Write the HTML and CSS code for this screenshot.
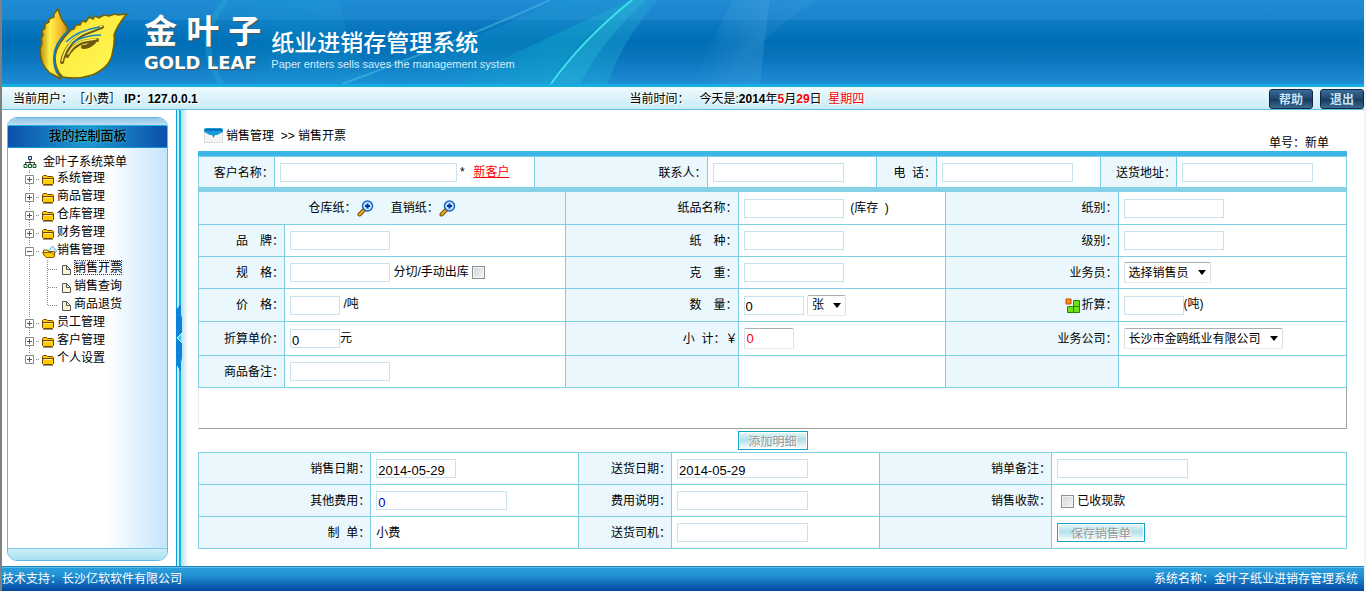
FILE: index.html
```html
<!DOCTYPE html>
<html lang="zh-CN">
<head>
    <meta charset="utf-8">
    <title>金叶子纸业进销存管理系统</title>
    <link rel="stylesheet" href="styles.css">
</head>
<body>
    <!-- shared icons -->
    <svg class="defs" width="0" height="0">
        <symbol id="plus" viewBox="0 0 18 18">
            <path d="M5.500 0v4M5.500 14v4M12 9.500h4" stroke="#888" stroke-dasharray="1 1"/>
            <path d="M1.500 5.500h8v8h-8z" fill="#fff" stroke="#888"/>
            <path d="M3 9.500h5M5.500 7v5" stroke="#555"/>
        </symbol>
        <symbol id="plus-last" viewBox="0 0 18 18">
            <path d="M5.500 0v4M12 9.500h4" stroke="#888" stroke-dasharray="1 1"/>
            <path d="M1.500 5.500h8v8h-8z" fill="#fff" stroke="#888"/>
            <path d="M3 9.500h5M5.500 7v5" stroke="#555"/>
        </symbol>
        <symbol id="minus" viewBox="0 0 18 18">
            <path d="M5.500 0v4M5.500 14v4M12 9.500h4" stroke="#888" stroke-dasharray="1 1"/>
            <path d="M1.500 5.500h8v8h-8z" fill="#fff" stroke="#888"/>
            <path d="M3 9.500h5" stroke="#555"/>
        </symbol>
        <symbol id="branch" viewBox="0 0 36 18">
            <path d="M5.500 0v18M23.500 0v18M24 9.500h10" stroke="#888" stroke-dasharray="1 1"/>
        </symbol>
        <symbol id="branch-last" viewBox="0 0 36 18">
            <path d="M5.500 0v18M23.500 0v9M24 9.500h10" stroke="#888" stroke-dasharray="1 1"/>
        </symbol>
        <symbol id="folder" viewBox="0 0 15 18">
            <path d="M0.500 13.500v-7l1-1h3l1 1h5l1 1v6l-1 1h-9z" fill="#fc0" stroke="#7a4300"/>
            <path d="M1 8.500h10" stroke="#7a4300"/>
            <path d="M2 9.500h8" stroke="#ffec8a"/>
            <path d="M1 15.500h10" stroke="#998"/>
        </symbol>
        <symbol id="folder-open" viewBox="0 0 15 18">
            <path d="M6.500 9l4-5 4 5-2 3h-5z" fill="#d8f3fb" stroke="#58b4d8"/>
            <path d="M1.500 13v-5h4l1 1.500h6v4z" fill="#ffe27a" stroke="#8a5a00"/>
            <path d="M.5 10.500h9l2 1.500 1.500 2-2 1.500h-7z" fill="#fc0" stroke="#8a5a00"/>
        </symbol>
        <symbol id="page" viewBox="0 0 12 18">
            <path d="M1.500 5.500h4l4 4v5h-8z" fill="#fff3d6" stroke="#555"/>
            <path d="M5.500 5.500v4h4" fill="none" stroke="#555"/>
        </symbol>
        <symbol id="search" viewBox="0 0 17 17">
            <path d="M2.500 14.500l5-5" stroke="#7a4a00" stroke-width="4" stroke-linecap="round"/>
            <path d="M2.500 14.500l4-4" stroke="#f0b020" stroke-width="2" stroke-linecap="round"/>
            <circle cx="10.500" cy="6" r="5" fill="#bfe6ff" stroke="#1c62c4" stroke-width="1.500"/>
            <path d="M8 6h5M10.500 3.500v5" stroke="#0a2f9c" stroke-width="2"/>
        </symbol>
    </svg>

    <header class="banner">
        <svg class="banner-bg" viewBox="0 0 1362 84" preserveAspectRatio="xMinYMin slice">
            <defs>
                <linearGradient id="sweep" x1="0" x2="1">
                    <stop offset="0" stop-color="#0fb4cf" stop-opacity="0"/>
                    <stop offset=".5" stop-color="#12b3d2" stop-opacity=".5"/>
                    <stop offset="1" stop-color="#2cb5d5" stop-opacity=".35"/>
                </linearGradient>
                <linearGradient id="veil" x1="0" x2="1">
                    <stop offset="0" stop-color="#4fa6dc" stop-opacity="0"/>
                    <stop offset="1" stop-color="#4fa6dc" stop-opacity=".5"/>
                </linearGradient>
            </defs>
            <path d="M216 0q-30 40 8 84H380Q340 40 338 0z" fill="url(#sweep)" opacity=".3"/>
            <path d="M224 0Q190 40 220 84" fill="none" stroke="#27b6dc" stroke-width="6" opacity=".3"/>
            <path d="M300 84Q460 50 556 0H630Q560 50 550 84z" fill="url(#sweep)" opacity=".4"/>
            <path d="M340 84Q460 40 548 0" fill="none" stroke="#5fd0e6" stroke-width="2" opacity=".4"/>
            <path d="M450 84Q560 30 630 0H656Q620 40 606 84z" fill="url(#sweep)" opacity=".8"/>
            <path d="M552 84Q580 40 630 0H644Q600 40 578 84z" fill="#31c4df" opacity=".3"/>
            <path d="M549 84Q580 40 630 0" fill="none" stroke="#3fe0ee" stroke-width="2"/>
            <path d="M690 84L730 0H768Q762 40 758 84z" fill="url(#veil)" opacity=".6"/>
            <path d="M706 84Q712 40 730 0H814Q750 40 732 84z" fill="url(#veil)" opacity=".4"/>
        </svg>
        <a class="logo" href="#" aria-label="金叶子">
            <svg width="92" height="74" viewBox="38 6 92 74">
                <defs>
                    <linearGradient id="gold" x1="0" y1="0" x2="1" y2="1">
                        <stop offset="0" stop-color="#c89410"/>
                        <stop offset=".3" stop-color="#ffe93c"/>
                        <stop offset=".75" stop-color="#fff552"/>
                        <stop offset="1" stop-color="#c09208"/>
                    </linearGradient>
                    <linearGradient id="gold-left" x1="0" x2="1">
                        <stop offset="0" stop-color="#b98c0a"/>
                        <stop offset=".35" stop-color="#fff04c"/>
                        <stop offset=".75" stop-color="#f4b92a"/>
                        <stop offset="1" stop-color="#c08a10"/>
                    </linearGradient>
                </defs>
                <path d="M58 9l-4 5v3l-5 2v3l-4 2v4l-3 3 1 4-2 4 1 4-2 6q0 16 10 24l11 6q-9-14-2-32 3-8 9-16l-1-4-5-7-2-5z" fill="url(#gold-left)" stroke="#776000" stroke-width="1.500"/>
                <path d="M127 14l-9 1-3-1-6 2-5-1-5 3-4-2-2 3-4-2-3 5-4-1-2 4-4 0-2 4-3 1Q57 44 55 56q0 15 8 21 14 3 29-2 17-7 20-20 3-12 2-20 3-9 11-19z" fill="url(#gold)" stroke="#776000" stroke-width="1.500"/>
                <path d="M68 31Q54 44 54 58q0 10 4 16" fill="none" stroke="#0f78b0" stroke-width="2"/>
                <path d="M102 27l-18 7Q66 43 62 62M97 40l-14 2q-11 4-16 14M83 47q6 0 11-5" fill="none" stroke="#6b5b10" stroke-width="4" stroke-linecap="round"/>
                <path d="M102 26l-18 7Q66 42 62 61M96 39l-13 2q-11 4-15 13" fill="none" stroke="#f8ec60" stroke-width="1.500" stroke-linecap="round"/>
                <path d="M66 42q12-12 34-15M72 43q12-8 29-8" fill="none" stroke="#1787bd" stroke-width="1.500"/>
            </svg>
            <span class="brand">
                <span class="brand-cn">金 叶 子</span>
                <span class="brand-en">GOLD LEAF</span>
            </span>
        </a>
        <div class="sysname">
            <h1>纸业进销存管理系统</h1>
            <p>Paper enters sells saves the management system</p>
        </div>
    </header>

    <div class="statusbar">
        <div>当前用户：［小费］ <b>IP：127.0.0.1</b></div>
        <div class="today"><span>当前时间：</span><span>今天是:<b>2014</b>年<b class="red">5</b>月<b class="red">29</b>日&nbsp; <span class="red">星期四</span></span></div>
        <div class="actions">
            <button type="button">帮助</button>
            <button type="button">退出</button>
        </div>
    </div>

    <div class="main">
        <nav class="sidebar">
            <div class="panel">
                <div class="panel-cap"></div>
                <h2>我的控制面板</h2>
                <div class="panel-body">
                    <div class="tree-root">
                        <svg width="14" height="14" viewBox="0 0 14 14"><path d="M7 4v6M2.500 10V7.500h9V10" fill="none" stroke="#333"/><path d="M5.500 1.500h3v3h-3z" fill="#cde" stroke="#235"/><path d="M1 9.500h3v3H1zM5.500 9.500h3v3h-3zM10 9.500h3v3h-3z" fill="#cfc" stroke="#253"/></svg>
                        金叶子系统菜单
                    </div>
                    <ul class="tree">
                        <li><svg width="18" height="18"><use href="#plus"/></svg><svg width="15" height="18"><use href="#folder"/></svg><a href="#">系统管理</a></li>
                        <li><svg width="18" height="18"><use href="#plus"/></svg><svg width="15" height="18"><use href="#folder"/></svg><a href="#">商品管理</a></li>
                        <li><svg width="18" height="18"><use href="#plus"/></svg><svg width="15" height="18"><use href="#folder"/></svg><a href="#">仓库管理</a></li>
                        <li><svg width="18" height="18"><use href="#plus"/></svg><svg width="15" height="18"><use href="#folder"/></svg><a href="#">财务管理</a></li>
                        <li><svg width="18" height="18"><use href="#minus"/></svg><svg width="15" height="18"><use href="#folder-open"/></svg><a href="#">销售管理</a></li>
                        <li><svg width="36" height="18"><use href="#branch"/></svg><svg width="14" height="18"><use href="#page"/></svg><a class="current" href="#">销售开票</a></li>
                        <li><svg width="36" height="18"><use href="#branch"/></svg><svg width="14" height="18"><use href="#page"/></svg><a href="#">销售查询</a></li>
                        <li><svg width="36" height="18"><use href="#branch-last"/></svg><svg width="14" height="18"><use href="#page"/></svg><a href="#">商品退货</a></li>
                        <li><svg width="18" height="18"><use href="#plus"/></svg><svg width="15" height="18"><use href="#folder"/></svg><a href="#">员工管理</a></li>
                        <li><svg width="18" height="18"><use href="#plus"/></svg><svg width="15" height="18"><use href="#folder"/></svg><a href="#">客户管理</a></li>
                        <li><svg width="18" height="18"><use href="#plus-last"/></svg><svg width="15" height="18"><use href="#folder"/></svg><a href="#">个人设置</a></li>
                    </ul>
                </div>
                <div class="panel-foot"></div>
            </div>
        </nav>

        <div class="splitter">
            <svg width="7" height="68" viewBox="0 0 7 68"><path d="M0 6L5 0v11l1 3v40l-1 4v10L0 60z" fill="#0a83d8"/><path d="M1 34l5-5v10z" fill="#29d3ee" stroke="#e8fbff"/></svg>
        </div>

        <form class="content">
            <div class="crumbs">
                <svg width="20" height="16" viewBox="0 0 20 16"><path d="M.5 3.500h18v12H.5z" fill="#f4f4f4" stroke="#ddd"/><path d="M0 5V2l2-1h15l2 1v3l-6 3h-2l-1.500 3L8 8H6z" fill="#189ad8"/><path d="M1 2h17v2H1z" fill="#0b70b4"/></svg>
                <span>销售管理&nbsp; &gt;&gt; 销售开票</span>
                <span class="billno">单号：新单</span>
            </div>

            <table class="grid customer">
                <colgroup><col class="a1"><col class="a2"><col class="a3"><col class="a4"><col class="a5"><col class="a6"><col class="a1"><col class="a4"></colgroup>
                <tr>
                    <th><label for="customer">客户名称：</label></th>
                    <td><input id="customer" class="w177" type="text"> *&nbsp; <a class="newcust" href="#">新客户</a></td>
                    <th><label for="contact">联系人：</label></th>
                    <td><input id="contact" class="w131" type="text"></td>
                    <th><label for="phone">电&nbsp; 话：</label></th>
                    <td><input id="phone" class="w131" type="text"></td>
                    <th><label for="address">送货地址：</label></th>
                    <td><input id="address" class="w131" type="text"></td>
                </tr>
            </table>

            <table class="grid goods">
                <colgroup><col class="b1"><col class="b2"><col class="b3"><col class="b4"><col class="b3"><col class="b5"></colgroup>
                <tr>
                    <th class="pick" colspan="2">
                        <a href="#">仓库纸：<svg width="17" height="17"><use href="#search"/></svg></a>
                        <a href="#">直销纸：<svg width="17" height="17"><use href="#search"/></svg></a>
                    </th>
                    <th><label for="paper">纸品名称：</label></th>
                    <td><input id="paper" class="w100" type="text"> &nbsp;(库存&nbsp; )</td>
                    <th><label for="kind">纸别：</label></th>
                    <td><input id="kind" class="w100" type="text"></td>
                </tr>
                <tr>
                    <th><label for="brand">品&emsp;牌：</label></th>
                    <td><input id="brand" class="w100" type="text"></td>
                    <th><label for="sort">纸&emsp;种：</label></th>
                    <td><input id="sort" class="w100" type="text"></td>
                    <th><label for="level">级别：</label></th>
                    <td><input id="level" class="w100" type="text"></td>
                </tr>
                <tr>
                    <th><label for="spec">规&emsp;格：</label></th>
                    <td><input id="spec" class="w100" type="text"> <label for="cut">分切/手动出库</label> <input id="cut" type="checkbox"></td>
                    <th><label for="weight">克&emsp;重：</label></th>
                    <td><input id="weight" class="w100" type="text"></td>
                    <th><label for="sales">业务员：</label></th>
                    <td><select id="sales"><option>选择销售员</option></select></td>
                </tr>
                <tr class="tall">
                    <th><label for="price">价&emsp;格：</label></th>
                    <td><input id="price" class="w50" type="text"> /吨</td>
                    <th><label for="amount">数&emsp;量：</label></th>
                    <td><input id="amount" class="w60" type="text" value="0"> <select aria-label="单位"><option>张</option></select></td>
                    <th><svg width="16" height="16" viewBox="0 0 16 16"><path d="M1 1h5v5H1z" fill="#ff8a1e" stroke="#c24a00"/><path d="M8.500 2.500h6v6h-6zM2.500 8.500h6v6h-6zM8.500 8.500h6v6h-6z" fill="#6fe01a" stroke="#1e8a00"/></svg><label for="conv">折算：</label></th>
                    <td><input id="conv" class="w60" type="text">(吨)</td>
                </tr>
                <tr class="taller">
                    <th><label for="unitprice">折算单价：</label></th>
                    <td><input id="unitprice" class="w50" type="text" value="0">元</td>
                    <th><label for="subtotal">小&nbsp; 计：￥</label></th>
                    <td><input id="subtotal" class="w50 subtotal" type="text" value="0"></td>
                    <th><label for="company">业务公司：</label></th>
                    <td><select id="company"><option>长沙市金鸥纸业有限公司</option></select></td>
                </tr>
                <tr>
                    <th><label for="note">商品备注：</label></th>
                    <td><input id="note" class="w100" type="text"></td>
                    <th></th>
                    <td></td>
                    <th></th>
                    <td></td>
                </tr>
            </table>

            <div class="details"></div>
            <div class="add"><button class="btn" type="button" disabled>添加明细</button></div>

            <table class="grid bill">
                <colgroup><col class="c1"><col class="c2"><col class="c3"><col class="c2"><col class="c1"><col class="c4"></colgroup>
                <tr>
                    <th><label for="saledate">销售日期：</label></th>
                    <td><input id="saledate" class="w80" type="text" value="2014-05-29"></td>
                    <th><label for="senddate">送货日期：</label></th>
                    <td><input id="senddate" class="w131" type="text" value="2014-05-29"></td>
                    <th><label for="billnote">销单备注：</label></th>
                    <td><input id="billnote" class="w131" type="text"></td>
                </tr>
                <tr>
                    <th><label for="otherfee">其他费用：</label></th>
                    <td><input id="otherfee" class="w131 blue" type="text" value="0"></td>
                    <th><label for="feenote">费用说明：</label></th>
                    <td><input id="feenote" class="w131" type="text"></td>
                    <th>销售收款：</th>
                    <td class="paid"><input id="cash" type="checkbox"> <label for="cash">已收现款</label></td>
                </tr>
                <tr>
                    <th>制&nbsp; 单：</th>
                    <td>小费</td>
                    <th><label for="driver">送货司机：</label></th>
                    <td><input id="driver" class="w131" type="text"></td>
                    <th></th>
                    <td><button class="btn save" type="button" disabled>保存销售单</button></td>
                </tr>
            </table>
        </form>
    </div>

    <footer>
        <span>技术支持：长沙亿软软件有限公司</span>
        <span>系统名称：金叶子纸业进销存管理系统</span>
    </footer>
</body>
</html>
```
FILE: styles.css
```css
* {
    box-sizing: border-box;
}

body {
    margin: 0;
    min-height: 100vh;
    display: flex;
    flex-direction: column;
    border-left: 2px solid #808080;
    border-right: 2px solid #f4f4f4;
    background: #fff;
    color: #000;
    font-family: "Liberation Sans", "Noto Sans CJK SC", sans-serif;
    font-size: 12px;
    line-height: 18px;
    text-spacing-trim: space-all;
}

h1, h2, p, ul {
    margin: 0;
    padding: 0;
    font-weight: normal;
}

a {
    color: inherit;
    text-decoration: none;
}

.defs {
    position: absolute;
}

.red {
    color: #f00;
}

/* Banner */
.banner {
    position: relative;
    display: flex;
    height: 87px;
    padding-left: 36px;
    border-bottom: 3px solid #12aee0;
    background: linear-gradient(#1f8cd6 0, #1a84cc 20px, #0e7cc4 20px, #006eb6 42px, #0a76be 60px, #1f8cd6 84px);
    color: #fff;
}

.banner-bg {
    position: absolute;
    left: 0;
    top: 0;
    width: 100%;
    height: 84px;
}

.logo {
    position: relative;
    display: flex;
    gap: 14px;
    padding-top: 6px;
}

.brand {
    display: flex;
    flex-direction: column;
    padding-top: 8px;
    text-shadow: 1px 1px 1px #555;
}

.brand-cn {
    font-size: 33px;
    font-weight: bold;
    line-height: 36px;
}

.brand-en {
    padding-top: 3px;
    font-family: "DejaVu Sans", sans-serif;
    font-size: 18px;
    font-weight: bold;
    line-height: 20px;
}

.sysname {
    position: relative;
    padding: 30px 0 0 10px;
}

.sysname h1 {
    font-size: 23px;
    font-weight: 500;
    line-height: 26px;
}

.sysname p {
    font-size: 11px;
    line-height: 16px;
    color: #d5ecfa;
}

/* User / date bar */
.statusbar {
    display: grid;
    grid-template-columns: 46% 1fr auto;
    align-items: center;
    height: 23px;
    padding: 1px 0 0 11px;
    border-bottom: 1px solid #5bbfe0;
    background: linear-gradient(#effbfe, #c8ebf6);
    text-shadow: 1px 1px 0 #fff;
}

.today {
    display: flex;
    gap: 10px;
    margin-left: -5px;
}

.actions {
    display: flex;
    gap: 7px;
}

.actions button {
    width: 44px;
    height: 20px;
    padding: 0;
    border: 1px solid #10283f;
    border-radius: 3px;
    background: linear-gradient(#3a6c9a, #1f4468 50%, #16385a 50%, #3d6a90);
    color: #c8e6fa;
    font: bold 12px/16px "Noto Sans CJK SC", sans-serif;
    text-shadow: none;
}

/* Left menu */
.main {
    flex: 1;
    display: flex;
}

.sidebar {
    display: flex;
    width: 174px;
    padding: 7px 8px 5px 5px;
}

.panel {
    flex: 1;
    display: flex;
    flex-direction: column;
    border: 1px solid #62b8e4;
    border-radius: 10px;
    overflow: hidden;
}

.panel-cap {
    height: 7px;
    background: linear-gradient(#8ec6ea, #c2dcf0);
}

.panel h2 {
    height: 23px;
    border-top: 1px solid #28b4e8;
    border-bottom: 1px solid #1b8fd6;
    background: linear-gradient(90deg, #0a50ac, #1e9ad0 50%, #0a50ac);
    font-size: 13px;
    font-weight: 500;
    line-height: 20px;
    text-align: center;
    text-shadow: 0 0 2px #5fd0f0;
}

.panel-body {
    flex: 1;
    padding: 5px 0 0 15px;
    background: linear-gradient(90deg, #fff 62%, #c4e5fc);
}

.tree-root {
    display: flex;
    align-items: center;
    gap: 6px;
    height: 17px;
}

.tree {
    list-style: none;
    padding-left: 1px;
}

.tree li {
    display: flex;
    height: 18px;
}

.tree a {
    height: 15px;
    line-height: 16px;
}

.tree .current {
    outline: 1px dotted #333;
    outline-offset: -1px;
}

.panel-foot {
    height: 12px;
    border-top: 1px solid #7ccbe8;
    background: linear-gradient(#cceef8, #a8e0f0);
}

.splitter {
    display: flex;
    align-items: center;
    width: 12px;
    background: linear-gradient(90deg, #0a9ad8 1px, #c5eefa 1px, #c5eefa 3px, #10b4e0 3px, #10b4e0 5px, #b5dcf0 5px, #fff);
}

/* Order form */
.content {
    flex: 1;
    padding: 0 17px 17px 10px;
}

.crumbs {
    display: flex;
    gap: 2px;
    height: 46px;
    padding: 17px 18px 0 6px;
    border-bottom: 5px solid #3cb6e6;
}

.billno {
    margin: 7px 0 0 auto;
}

.grid {
    width: 100%;
    table-layout: fixed;
    border-collapse: collapse;
}

.grid tr {
    height: 32px;
}

.grid .tall {
    height: 33px;
}

.grid .taller {
    height: 34px;
}

.customer tr {
    height: 33px;
}

.grid th,
.grid td {
    padding: 1px 0 0;
    border: 1px solid #7dcfe6;
    font-weight: normal;
    white-space: nowrap;
}

.grid th {
    background: #eaf8fd;
    text-align: right;
}

.grid td {
    padding-left: 5px;
}

.grid svg {
    vertical-align: middle;
}

.customer,
.goods tr:first-child th,
.goods tr:first-child td {
    border-top: 0;
}

.customer {
    border-bottom: 5px solid #85d1e8;
}

.grid .pick {
    text-align: center;
}

.pick a + a {
    margin-left: 14px;
}

.newcust {
    margin-left: 2px;
    color: #f00;
    text-decoration: underline;
}

input[type="text"] {
    height: 19px;
    padding: 3px 1px 0;
    border: 1px solid #c8e3ed;
    background: #fff;
    font: 13px/15px "Liberation Sans", sans-serif;
    vertical-align: middle;
}

input[type="checkbox"] {
    appearance: none;
    width: 13px;
    height: 13px;
    margin: 0;
    border: 1px solid #8e8f8f;
    background: linear-gradient(135deg, #cfd3d8, #f6f6f6);
    box-shadow: inset 0 0 0 1px #f4f4f4;
    vertical-align: middle;
}

.grid .paid {
    padding-left: 9px;
}

.w50 { width: 50px; }
.w60 { width: 60px; }
.w80 { width: 80px; }
.w100 { width: 100px; }
.w131 { width: 131px; }
.w177 { width: 177px; }

input.subtotal {
    height: 21px;
    padding: 0 2px;
    border-color: #ababb3 #dcdfe8 #e3e6ee;
    border-radius: 2px;
    color: #f00;
}

input.blue {
    color: #00c;
}

select {
    appearance: none;
    height: 21px;
    padding: 0 20px 0 4px;
    border: 1px solid;
    border-color: #ababb3 #dcdfe8 #e3e6ee;
    border-radius: 2px;
    background: #fff url("data:image/svg+xml,%3Csvg xmlns='http://www.w3.org/2000/svg' width='8' height='5'%3E%3Cpath d='M0 0h8L4 5z'/%3E%3C/svg%3E") no-repeat right 4px center;
    color: #000;
    font: 12px/18px "Liberation Sans", "Noto Sans CJK SC", sans-serif;
    vertical-align: middle;
}

.details {
    height: 41px;
    border: 1px solid #eee;
    border-top: 0;
    border-right-color: #a0a0a0;
    border-bottom-color: #a0a0a0;
}

.add {
    display: flex;
    justify-content: center;
    height: 23px;
    padding-top: 2px;
}

.btn {
    width: 70px;
    height: 19px;
    padding: 0;
    border: 1px solid #12a5c8;
    background: linear-gradient(#e8f8fb, #b4e0ea 45%, #c4e8f0 60%, #fff);
    box-shadow: inset 0 0 0 1px #fff;
    color: #999;
    font: 12px/17px "Noto Sans CJK SC", sans-serif;
    text-shadow: 1px 1px 0 #fff;
    vertical-align: middle;
}

.save {
    width: 88px;
}

/* Column widths */
.a1 { width: 6.6%; }
.a2 { width: 22.7%; }
.a3 { width: 15%; }
.a4 { width: 14.8%; }
.a5 { width: 5.2%; }
.a6 { width: 14.3%; }
.b1 { width: 7.5%; }
.b2 { width: 24.5%; }
.b3 { width: 15%; }
.b4 { width: 18.1%; }
.b5 { width: 19.9%; }
.c1 { width: 15%; }
.c2 { width: 18.1%; }
.c3 { width: 8.1%; }
.c4 { width: 25.7%; }

footer {
    display: flex;
    justify-content: space-between;
    align-items: center;
    height: 25px;
    padding-right: 6px;
    border-top: 1px solid #1c86c4;
    background: linear-gradient(#5cbdea 1px, #2a9edc 1px, #2292d4 8px, #0348a4);
    color: #fff;
}
```
